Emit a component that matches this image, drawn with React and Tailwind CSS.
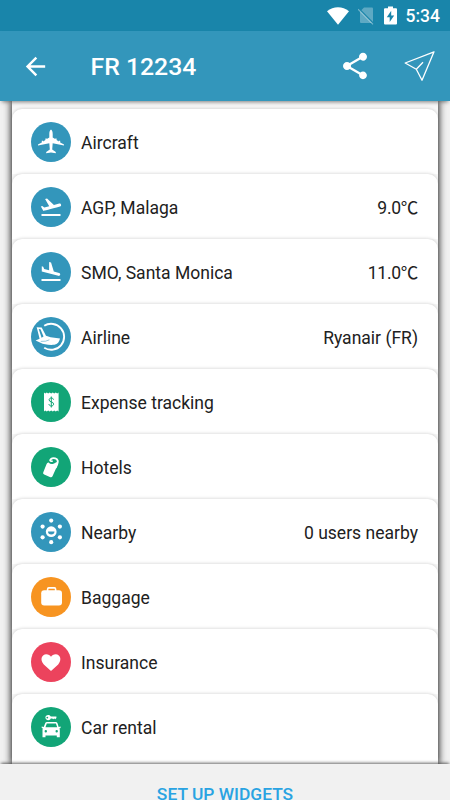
import React from 'react';
import { MdArrowBack, MdFlightLand, MdFlightTakeoff, MdShare } from 'react-icons/md';

const BLUE = 'bg-[#3396bb]';
const GREEN = 'bg-[#12a577]';

function Glyph({ children }) {
  return (
    <svg viewBox="0 0 40 40" className="size-10" fill="white">
      {children}
    </svg>
  );
}

const Aircraft = () => (
  <Glyph>
    <path d="M20 7.4C21.2 8 21.7 10 21.7 12V15.4L24.2 17.1V16.4H25.6V18.1L27.8 19.5V18.8H29.2V20.4L33 22.6V23.6L21.7 21.2L21.2 27.6L24.8 30V31.3L20 30.6L15.2 31.3V30L18.8 27.6L18.3 21.2L7 23.6V22.6L10.8 20.4V18.8H12.2V19.5L14.4 18.1V16.4H15.8V17.1L18.3 15.4V12C18.3 10 18.8 8 20 7.4Z" />
  </Glyph>
);

const Airline = () => (
  <Glyph>
    <path d="M13.2 8.8A13 13 0 1 1 13.2 30.8" fill="none" stroke="white" strokeWidth="1.9" />
    <path d="M5.7 10.3L10.7 10.6L15 18.8L19.6 20.3L29 21.4C28.3 24.6 26.6 27.2 23.4 27.8C17.8 28.1 12.5 27.6 9.5 25.8L4.6 23.4L8.6 21.8Z" />
    <path d="M7.7 12L9.5 12.2L12.5 19.6L10.6 20.8Z" fill="#3396bb" />
    <path d="M9.8 24.4Q15 24.8 18.4 22.8" stroke="#3396bb" strokeWidth=".5" fill="none" />
  </Glyph>
);

const Receipt = () => (
  <Glyph>
    <path d="M13 10.6L14.2 11.6L15.8 10.6L17.2 11.6L18.6 10.6L20.2 11.6L21.8 10.6L23.2 11.6L24.8 10.6L26.2 11.6L27.6 10.6V29.6L26.2 28.5L24.8 29.6L23.2 28.5L21.8 29.6L20.2 28.5L18.6 29.6L17.2 28.5L15.8 29.6L14.2 28.5L13 29.6Z" />
    <path d="M22.5 17.7C22.2 16.5 21.5 16 20.3 16C19 16 18.1 16.8 18.1 17.9C18.1 20.5 22.6 19.3 22.6 22C22.6 23.2 21.7 24 20.3 24C19 24 18.1 23.3 17.9 22M20.3 14.5V25.5" fill="none" stroke="#12a577" strokeWidth="1" />
  </Glyph>
);

const HotelTag = () => (
  <Glyph>
    <path d="M17.6 15.4Q19.4 17.6 22.4 16.8Q24.4 16.2 25.4 15L26.8 16.5L25.2 21L21.5 29.2Q20.8 30.7 19.4 30.2L13.2 27.6Q11.7 27 12.2 25.4L15.6 17Q16.2 15.2 17.6 15.4Z" />
    <path d="M18.9 13.8C19.8 11.6 22 10.8 24.2 11.4C26.9 12.2 27.4 14.6 26.2 17.2L24.6 21" fill="none" stroke="white" strokeWidth="1.9" />
    <path d="M18.9 13.6C19.8 14.6 20.8 14.4 21.7 13.9" fill="none" stroke="white" strokeWidth="1.4" />
  </Glyph>
);

const Nearby = () => (
  <Glyph>
    <circle cx="20.2" cy="19.7" r="5.4" />
    <path d="M17 19.6H23.5C23.5 21.4 22.2 22.5 20.2 22.5C18.2 22.5 17 21.4 17 19.6Z" fill="#3396bb" />
    <circle cx="20.2" cy="8.6" r="2.1" />
    <circle cx="28.9" cy="14.6" r="2.1" />
    <circle cx="28.9" cy="25.3" r="2.1" />
    <circle cx="20.2" cy="30.2" r="2.1" />
    <circle cx="11.6" cy="25.3" r="2.1" />
    <circle cx="11.6" cy="14.6" r="2.1" />
  </Glyph>
);

const Baggage = () => (
  <Glyph>
    <rect x="10.2" y="13.2" width="20.8" height="15.2" rx="3" />
    <path d="M16.6 14V12.2Q16.6 10.9 17.8 10.9H23.4Q24.6 10.9 24.6 12.2V14" fill="none" stroke="white" strokeWidth="1.6" />
  </Glyph>
);

const Heart = () => (
  <Glyph>
    <path d="M20 29L12.8 22.4C8.4 17.7 11 12.3 15.2 12.3C17.4 12.3 19.1 13.3 20 14.8C20.9 13.3 22.6 12.3 24.8 12.3C29 12.3 31.4 17.7 27.2 22.4Z" />
  </Glyph>
);

const CarRental = () => (
  <Glyph>
    <path fillRule="evenodd" d="M17.2 8C18.5 8 19.4 8.7 19.8 9.6H25.4V11L24.3 12.2L23.3 11.5L22.2 12.2L21.2 11.5H19.8C19.4 12.4 18.5 13.2 17.2 13.2C15.6 13.2 14.4 12 14.4 10.6C14.4 9.2 15.6 8 17.2 8ZM16.3 9.7A.9.9 0 1 0 16.3 11.5A.9.9 0 1 0 16.3 9.7Z" />
    <path fillRule="evenodd" d="M14.3 16Q14.7 15 16 15H24.7Q26 15 26.4 16L27.7 20L29.6 19.6V21L28.3 21.6Q28.8 22 28.8 23V30.2H25.8V28.4H14.5V30.2H11.5V23Q11.5 22 12 21.6L10.7 21V19.6L12.7 20ZM15.8 16.5L14.5 20.3H26.2L24.9 16.5ZM14.8 23A1.2 1.2 0 1 0 14.8 25.4A1.2 1.2 0 1 0 14.8 23ZM25.7 23A1.2 1.2 0 1 0 25.7 25.4A1.2 1.2 0 1 0 25.7 23Z" />
  </Glyph>
);

const rows = [
  { label: 'Aircraft', color: BLUE, icon: <Aircraft /> },
  { label: 'AGP, Malaga', value: '9.0℃', tight: true, color: BLUE, icon: <MdFlightTakeoff className="size-6 text-white" /> },
  { label: 'SMO, Santa Monica', value: '11.0℃', tight: true, color: BLUE, icon: <MdFlightLand className="size-6 text-white" /> },
  { label: 'Airline', value: 'Ryanair (FR)', color: BLUE, icon: <Airline /> },
  { label: 'Expense tracking', color: GREEN, icon: <Receipt /> },
  { label: 'Hotels', color: GREEN, icon: <HotelTag /> },
  { label: 'Nearby', value: '0 users nearby', color: BLUE, icon: <Nearby /> },
  { label: 'Baggage', color: 'bg-[#f79421]', icon: <Baggage /> },
  { label: 'Insurance', color: 'bg-[#ec435d]', icon: <Heart /> },
  { label: 'Car rental', color: GREEN, icon: <CarRental /> },
];

function Row({ label, value, tight, color, icon }) {
  return (
    <li className="h-[65px] bg-[#f7f7f7]">
      <div className="flex h-full items-start rounded-t-[10px] bg-white pt-[12.5px] pr-5 pl-[19px] shadow-[0_-1px_3px_rgba(0,0,0,0.12)]">
        <span className={`flex size-10 shrink-0 items-center justify-center rounded-full ${color}`}>{icon}</span>
        <span className="mt-[9.5px] ml-[10px] text-[17.55px] leading-6">{label}</span>
        <span className={`mt-[9.5px] ml-auto text-[17.55px] leading-6 ${tight ? 'tracking-[-0.3px]' : ''}`}>{value}</span>
      </div>
    </li>
  );
}

export default function App() {
  return (
    <div className="flex h-[800px] w-[450px] flex-col overflow-hidden bg-[#f1f1f1] font-[Roboto,'Noto_Sans_CJK_JP',sans-serif] text-[#212121]">
      <div className="flex h-[31px] shrink-0 items-center justify-end bg-[#1985aa] pr-[10px] text-white">
        <svg viewBox="0 0 22 18" className="mr-[9px] h-[18px] w-[22px]" fill="white">
          <path d="M0 4.2C6.4-1 15.6-1 22 4.2L11 17.8Z" />
        </svg>
        <svg viewBox="0 0 17 19" className="mr-[9px] h-[19px] w-[17px]">
          <path d="M6 1.5H14Q15 1.5 15 2.5V17H3Q2 17 2 16V5.5Z" fill="white" fillOpacity=".3" />
          <path d="M.4 2.2L16 18" stroke="#1985aa" strokeWidth="1.6" />
          <path d="M0 3.2L15 18.3" stroke="white" strokeOpacity=".4" strokeWidth="1.2" />
        </svg>
        <svg viewBox="0 0 13 19" className="mr-[9px] h-[19px] w-[13px]">
          <path fill="white" fillRule="evenodd" d="M4 .5H9V2.2H12Q13 2.2 13 3.2V17.5Q13 18.5 12 18.5H1Q0 18.5 0 17.5V3.2Q0 2.2 1 2.2H4ZM7.2 4.8L2.8 11.2H5.7V16L10.2 9.4H7.2Z" />
        </svg>
        <span className="pt-px text-[17.5px] leading-5 font-medium">5:34</span>
      </div>
      <header className="z-10 flex h-[70px] shrink-0 items-center bg-[#3396bb] pr-[15px] pl-[20.5px] text-white shadow-[0_3px_4px_-2px_rgba(0,0,0,0.5)]">
        <MdArrowBack className="size-[29px]" />
        <h1 className="mt-px ml-[41px] text-[24.8px] leading-8 font-medium">FR 12234</h1>
        <MdShare className="ml-auto size-[32px]" />
        <svg viewBox="0 0 32 32" className="ml-[32px] size-8" fill="none" stroke="white" strokeWidth="1.3" strokeLinejoin="round">
          <path d="M31 1.8L2.2 13L13.3 19.2L19 30.2ZM13.3 19.2L20 12.2" />
        </svg>
      </header>
      <main className="flex min-h-0 flex-1 justify-center">
        <div className="h-full w-[426px] bg-[#f8f8f8] pt-2 shadow-[0_0_7px_1px_rgba(0,0,0,0.85)]">
          <ul>
            {rows.map((row) => (
              <Row key={row.label} {...row} />
            ))}
          </ul>
          <div className="h-5 bg-white" />
        </div>
      </main>
      <footer className="z-10 flex h-9 shrink-0 justify-center bg-[#f1f1f1] pt-[18px] text-[17.4px] leading-6 font-medium text-[#29a3e2] shadow-[0_-2px_3px_-1px_rgba(0,0,0,0.6)]">
        SET UP WIDGETS
      </footer>
    </div>
  );
}
